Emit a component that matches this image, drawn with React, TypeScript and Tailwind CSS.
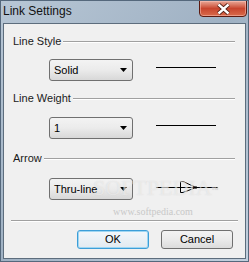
import { ReactNode } from 'react';

const font = { fontFamily: '"Liberation Sans", Arial, sans-serif' };

function GroupHeader({ label }: { label: string }) {
  return (
    <div className="flex items-center h-[14px] pl-[9px] pr-[10px]">
      <span className="text-[11px] leading-[14px] text-[#1a1a1a] whitespace-nowrap">{label}</span>
      <div className="flex-1 ml-[2px] mt-[1px] h-[2px] border-t border-[#a0a0a0] border-b border-b-white" />
    </div>
  );
}

function Dropdown({ value }: { value: string }) {
  return (
    <div className="w-[84px] h-[22px] flex items-center justify-between pl-[4px] pr-[5px] rounded-[3px] border border-[#707070] bg-gradient-to-b from-[#f3f3f3] via-[#ebebeb] to-[#d8d8d8]">
      <span className="text-[11px] text-black leading-none">{value}</span>
      <svg width="7" height="4" viewBox="0 0 7 4">
        <path d="M0 0H7L3.5 4Z" fill="#000" />
      </svg>
    </div>
  );
}

function Row({ value, children }: { value: string; children: ReactNode }) {
  return (
    <div className="flex items-center pl-[45px]">
      <Dropdown value={value} />
      <div className="ml-[23px]">{children}</div>
    </div>
  );
}

function Line() {
  return <div className="w-[60px] h-px bg-black mb-[5px]" />;
}

function ArrowGlyph() {
  return (
    <svg width="62" height="13" viewBox="0 0 62 13" className="mb-[3px]">
      <line x1="0" y1="6.5" x2="62" y2="6.5" stroke="#000" strokeWidth="1" />
      <path d="M24.5 0.5V11.5M24.5 0.5H27L40 6.5L27 11.5H24.5" fill="none" stroke="#000" strokeWidth="1" />
      <rect x="39" y="5.5" width="2" height="2" fill="#000" />
    </svg>
  );
}

function Button({ label, focused }: { label: string; focused?: boolean }) {
  return (
    <div
      className={
        'w-[72px] h-[19px] flex items-center justify-center rounded-[3px] text-[11px] text-black bg-gradient-to-b ' +
        (focused
          ? 'border border-[#3c9ed8] from-[#f2f7fb] to-[#e2eaf0] shadow-[inset_0_0_0_1px_#9fd6f2]'
          : 'border border-[#707070] from-[#f3f3f3] via-[#ebebeb] to-[#dcdcdc]')
      }
    >
      {label}
    </div>
  );
}

export default function App() {
  return (
    <div
      className="relative w-[249px] h-[262px] flex flex-col border border-[#55687c] bg-gradient-to-br from-[#b7c6d5] via-[#9fb1c3] to-[#c2d0de] overflow-hidden"
      style={font}
    >
      {/* title bar */}
      <div className="flex justify-between h-[22px] shrink-0">
        <span className="pl-[2px] pt-[3px] text-[12px] leading-[14px] text-[#111]">Link Settings</span>
        <div className="mr-[1px] -mt-[1px] w-[48px] h-[17px] rounded-b-[4px] border border-[#5c1a10] bg-gradient-to-b from-[#e8a898] via-[#c8452e] to-[#d86a4a] shadow-[inset_0_0_0_1px_rgba(255,200,190,0.5)] flex items-center justify-center">
          <svg width="15" height="12" viewBox="0 0 15 12">
            <path d="M2.5 1.5L7.5 6L12.5 1.5M2.5 10.5L7.5 6L12.5 10.5" stroke="#4a1a10" strokeWidth="4.2" fill="none" />
            <path d="M2.5 1.5L7.5 6L12.5 1.5M2.5 10.5L7.5 6L12.5 10.5" stroke="#fff" strokeWidth="2.4" fill="none" />
          </svg>
        </div>
      </div>

      {/* client area */}
      <div className="relative flex-1 mx-[2px] mb-[2px] border border-[#5d6d7d] bg-[#f0f0f0] flex flex-col">
        <div className="pt-[10px]">
          <GroupHeader label="Line Style" />
        </div>
        <div className="mt-[11px]">
          <Row value="Solid">
            <Line />
          </Row>
        </div>
        <div className="mt-[10px]">
          <GroupHeader label="Line Weight" />
        </div>
        <div className="mt-[12px]">
          <Row value="1">
            <Line />
          </Row>
        </div>
        <div className="mt-[12px]">
          <GroupHeader label="Arrow" />
        </div>
        <div className="mt-[13px]">
          <Row value="Thru-line">
            <ArrowGlyph />
          </Row>
        </div>
        <div className="mt-[20px] mx-[7px] h-[2px] border-t border-[#a0a0a0] border-b border-b-white" />
        <div className="mt-[8px] flex justify-end gap-[12px] pr-[12px]">
          <Button label="OK" focused />
          <Button label="Cancel" />
        </div>

        {/* watermark */}
        <div
          className="pointer-events-none absolute left-[89px] top-[153px] text-[22px] leading-none whitespace-nowrap text-white/45 [text-shadow:0_0_1px_rgba(190,190,190,0.5)]"
          style={{ fontFamily: '"Liberation Serif", serif' }}
        >
          SOFTPEDIA<sup className="text-[7px] text-[#d0d0d0]">™</sup>
        </div>
        <div
          className="pointer-events-none absolute left-[109px] top-[183px] text-[10px] leading-none whitespace-nowrap text-[#c8c8c8]"
          style={{ fontFamily: '"Liberation Serif", serif' }}
        >
          www.softpedia.com
        </div>
      </div>
    </div>
  );
}
